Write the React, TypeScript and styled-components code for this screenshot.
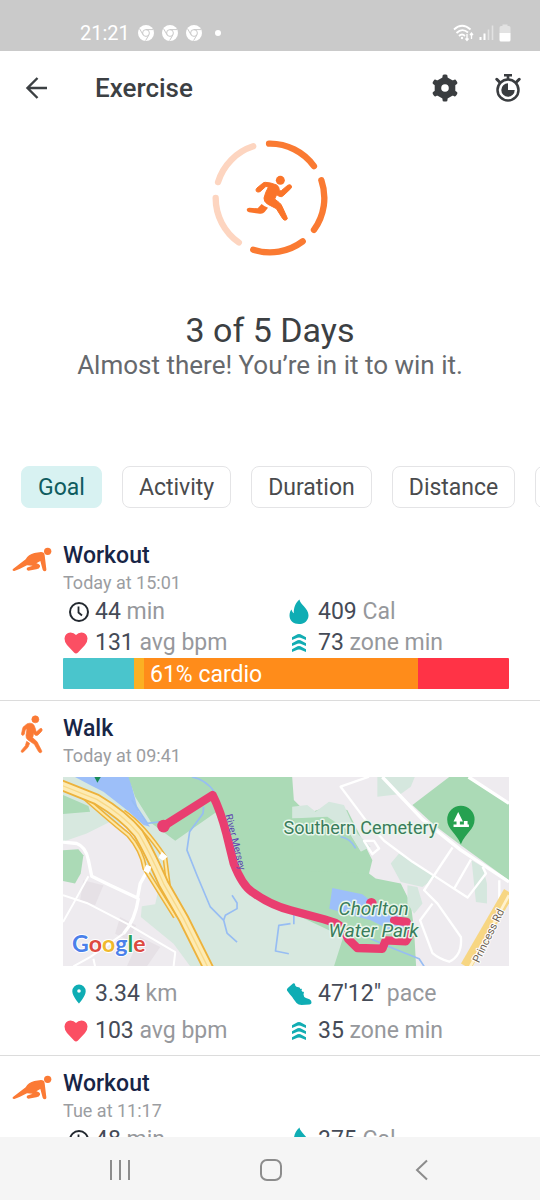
import React from "react";
import styled, { createGlobalStyle } from "styled-components";

const GlobalStyle = createGlobalStyle`
  * { box-sizing: border-box; }
  body { margin: 0; background: #fff; font-family: Roboto, "Liberation Sans", sans-serif; color: #3c4043; }
  button { font: inherit; color: inherit; border: 0; padding: 0; background: none; cursor: pointer; }
  svg { display: block; }
  h1, h2, h3, p, ul { margin: 0; padding: 0; }
`;

const Screen = styled.div`
  display: flex;
  flex-direction: column;
  height: 100vh;
  overflow: hidden;
`;

const StatusBar = styled.div`
  flex: none;
  display: flex;
  align-items: center;
  justify-content: space-between;
  height: 51px;
  padding: 15px 29px 0 80px;
  background: #cacaca;
  color: #fff;
  font-size: 20px;
`;

const StatusGroup = styled.div<{ $gap: number }>`
  display: flex;
  align-items: center;
  gap: ${(p) => p.$gap}px;
`;

const Dot = styled.span`
  width: 6px;
  height: 6px;
  margin-left: 5px;
  border-radius: 50%;
  background: #fff;
`;

const AppBar = styled.header`
  flex: none;
  display: flex;
  align-items: center;
  height: 74px;
  padding: 0 17px 0 24px;
`;

const ScreenTitle = styled.h1`
  flex: 1;
  margin-left: 45px;
  font-size: 26px;
  line-height: 32px;
  font-weight: 500;
`;

const Actions = styled.div`
  display: flex;
  align-items: center;
  gap: 34px;
`;

const Content = styled.main`
  flex: 1;
  min-height: 0;
  overflow-y: auto;
  scrollbar-width: none;
`;

const Hero = styled.section`
  display: flex;
  flex-direction: column;
  align-items: center;
  padding-top: 15px;
`;

const HeroTitle = styled.h2`
  margin-top: 54px;
  font-size: 34px;
  line-height: 40px;
  font-weight: 400;
`;

const HeroText = styled.p`
  font-size: 26px;
  line-height: 30px;
  color: #66696d;
`;

const Chips = styled.nav`
  display: flex;
  gap: 20px;
  margin: 86px 0 20px;
  padding-left: 21px;
  overflow: hidden;
`;

const Chip = styled.button<{ $active?: boolean }>`
  && {
    flex: none;
    height: 42px;
    padding: 0 16px;
    border: 1px solid ${(p) => (p.$active ? "#d8f2f2" : "#e4e4e6")};
    border-radius: 8px;
    background: ${(p) => (p.$active ? "#d8f2f2" : "#fff")};
    color: ${(p) => (p.$active ? "#0f5c5f" : "#4a4b4d")};
    font-size: 23px;
  }
`;

const List = styled.ul`
  list-style: none;
`;

const Entry = styled.li`
  display: flex;
  padding: 14px 31px 0 0;
  border-bottom: 1px solid #dcdcdc;
`;

const EntryIcon = styled.div<{ $top: number }>`
  flex: none;
  display: flex;
  justify-content: center;
  align-items: flex-start;
  width: 63px;
  padding-top: ${(p) => p.$top}px;
`;

const EntryBody = styled.div<{ $bottom: number }>`
  flex: 1;
  min-width: 0;
  padding-bottom: ${(p) => p.$bottom}px;
`;

const EntryTitle = styled.h3`
  font-size: 23px;
  line-height: 28px;
  font-weight: 500;
  color: #172546;
`;

const EntryTime = styled.p`
  font-size: 18px;
  line-height: 26px;
  color: #9b9da1;
`;

const Stats = styled.div<{ $row: number; $top?: number }>`
  display: grid;
  grid-template-columns: 1fr 1fr;
  grid-auto-rows: ${(p) => p.$row}px;
  align-items: center;
  margin-top: ${(p) => p.$top ?? 0}px;
`;

const StatBox = styled.div`
  display: flex;
  align-items: center;
  gap: 6px;
  font-size: 23px;
  line-height: 28px;
  color: #454b57;
  white-space: nowrap;
`;

const StatIcon = styled.span<{ $end?: boolean }>`
  display: flex;
  justify-content: ${(p) => (p.$end ? "flex-end" : "center")};
  width: 26px;
`;

const Unit = styled.span`
  color: #96989c;
`;

const ZoneBar = styled.div`
  display: flex;
  height: 31px;
  border-radius: 1px;
  overflow: hidden;
`;

const Zone = styled.div<{ $share: number; $color: string }>`
  flex: ${(p) => p.$share} 1 0;
  min-width: 0;
  background: ${(p) => p.$color};
  color: #fff;
  font-size: 23px;
  line-height: 34px;
  white-space: nowrap;
  text-indent: 6px;
`;

const MapFrame = styled.div`
  margin-top: 8px;

  svg {
    width: 100%;
    height: auto;
  }
`;

const NavBar = styled.nav`
  flex: none;
  display: flex;
  align-items: center;
  justify-content: space-between;
  height: 63px;
  padding: 2px 104px 0 106px;
  background: #f5f5f5;
`;

const NavButton = styled.button`
  display: flex;
  align-items: center;
  justify-content: center;
  width: 28px;
  height: 40px;
`;

const BrowserIcon = () => (
  <svg width="16" height="16" viewBox="0 0 16 16" aria-hidden="true">
    <circle cx="8" cy="8" r="8" fill="#fff" />
    <g fill="none" stroke="#cacaca" strokeWidth="1">
      <circle cx="8" cy="8" r="3.4" />
      <path d="M8 4.6H15M5 9.7L1.6 3.8M11 9.7L7.6 15.6" />
    </g>
  </svg>
);

const WifiIcon = () => (
  <svg width="21" height="18" viewBox="0 0 21 18" fill="none" stroke="#fff" aria-hidden="true">
    <path d="M1 5.5Q9 -2 17.500 5.500M3.500 9Q9 3.500 15 8.500M6 12Q9 9 12 12" strokeWidth="1.8" />
    <circle cx="9" cy="14" r="1.200" fill="#fff" stroke="none" />
    <path d="M14 10V16M12.500 14.500L14 16.500L15.500 14.500M18.500 15V9.500M17 11L18.500 9L20 11" strokeWidth="1.300" />
  </svg>
);

const SignalIcon = () => (
  <svg width="15" height="16" viewBox="0 0 15 16" aria-hidden="true">
    <path d="M1.500 12V15M5.500 8.500V15" stroke="#fff" strokeWidth="2" />
    <path d="M9.500 4.500V15M13.500 .500V15" stroke="#fff" strokeOpacity=".45" strokeWidth="1.600" />
  </svg>
);

const BatteryIcon = () => (
  <svg width="12" height="18" viewBox="0 0 12 18" aria-hidden="true">
    <path d="M.5 3.500Q.5 2 2 2H3.500V.500H8.500V2H10Q11.500 2 11.500 3.500V9H.5Z" fill="#fff" fillOpacity=".45" />
    <path d="M.5 9H11.500V16Q11.500 17.500 10 17.500H2Q.5 17.500 .5 16Z" fill="#fff" />
  </svg>
);

const BackArrow = () => (
  <svg width="26" height="26" viewBox="0 0 26 26" fill="none" stroke="#3c4043" strokeWidth="2.4" aria-hidden="true">
    <path d="M23 13H4M13.500 3L3.500 13L13.500 23" />
  </svg>
);

const GearIcon = () => (
  <svg width="28" height="28" viewBox="0 0 28 28" fill="#3a3d40" aria-hidden="true">
    <path d="M14 3.800L22.800 8.900V19.100L14 24.200L5.200 19.100V8.900Z" stroke="#3a3d40" strokeWidth="3" strokeLinejoin="round" />
    {[0, 60, 120, 180, 240, 300].map((a) => (
      <rect key={a} x="11.5" y="0.5" width="5" height="6" rx="1.5" transform={`rotate(${a} 14 14)`} />
    ))}
    <circle cx="14" cy="14" r="3.800" fill="#fff" />
  </svg>
);

const StopwatchIcon = () => (
  <svg width="30" height="30" viewBox="0 0 30 30" fill="none" stroke="#3a3d40" aria-hidden="true">
    <circle cx="15" cy="17" r="10.500" strokeWidth="2.500" />
    <path d="M11 2.200H19M15 2V6" strokeWidth="2.600" />
    <path d="M3.800 6.300L7 9.500M26.200 6.300L23 9.500" strokeWidth="3" strokeLinecap="round" />
    <path d="M15 10.300V17H21.700A6.700 6.700 0 1 1 15 10.300Z" fill="#3a3d40" stroke="none" />
  </svg>
);

const ringPoint = (deg: number) => {
  const a = (deg * Math.PI) / 180;
  return `${211 + 163 * Math.sin(a)} ${203 - 163 * Math.cos(a)}`;
};

const GoalRing = ({ done, total }: { done: number; total: number }) => (
  <svg width="116" height="116" viewBox="37 29 348 348" role="img" aria-label={`${done} of ${total}`}>
    <g fill="none" strokeWidth="19" strokeLinecap="round">
      {Array.from({ length: total }, (_, i) => (
        <path
          key={i}
          d={`M${ringPoint(i * 72 - 1)}A163 163 0 0 1 ${ringPoint(i * 72 + 54)}`}
          stroke={i < done ? "#fa7a32" : "#fdd5c0"}
        />
      ))}
    </g>
    <g fill="#fa7429">
      <circle cx="242" cy="150" r="13.500" />
      <path
        d="M197 156Q212 156 231 164Q238 168 239 178Q242 183 245 181L264 165Q270 161 274 165Q278 170 273 175L251 196Q245 202 237 197L231 193L225 206L239 217Q244 221 247 228L262 261Q265 267 259 269Q253 271 249 265L230 235L203 221Q192 213 193 203Q197 185 206 171L199 168L181 184Q174 187 170 183Q167 178 172 173L189 159Q192 156 197 156Z"
        stroke="#fa7429"
        strokeWidth="3"
      />
      <path d="M186 221Q194 229 205 232L195 245Q189 252 180 250L148 246Q141 243 141 238Q142 232 149 232L174 234Z" />
    </g>
  </svg>
);

const WorkoutIcon = () => (
  <svg width="40" height="25" viewBox="35 38 120 75" fill="#fb7a35" aria-hidden="true">
    <circle cx="142" cy="51" r="11" />
    <path d="M38 104L76 75Q84 60 102 56L122 53Q132 53 133 63L138 104Q139 110 134 111Q129 111 127 106L120 80L108 87Q121 91 119 97Q117 104 108 105L84 109Q78 108 79 103Q80 99 86 98L97 94L80 93Q60 104 42 110Q34 109 38 104Z" />
  </svg>
);

const WalkIcon = () => (
  <svg width="23" height="39" viewBox="60 38 69 117" fill="#fb7a35" stroke="#fb7a35" strokeWidth="2" strokeLinejoin="round" aria-hidden="true">
    <circle cx="106" cy="51" r="10.500" />
    <path d="M82 64Q90 61 97 64Q103 67 105 76L109 89L119 80Q124 76 126 80Q128 83 124 88L114 98Q107 102 103 96L101 93L98 106L110 117Q113 120 115 126L125 145Q127 150 122 151Q117 152 115 147L103 126L84 113Q77 108 78 99L81 79L76 82L73 95Q71 100 67 99Q63 97 65 92L68 78Q69 74 73 71Z" />
    <path d="M80 117L89 123L84 135L71 148Q66 152 64 149Q62 146 66 142L76 130Z" />
  </svg>
);

const ClockIcon = () => (
  <svg width="20" height="20" viewBox="0 0 20 20" fill="none" stroke="#22282f" strokeWidth="2" aria-hidden="true">
    <circle cx="10" cy="10" r="9" />
    <path d="M9.500 4.500V10.500L13 13.500" strokeWidth="1.800" />
  </svg>
);

const HeartIcon = () => (
  <svg width="26" height="24" viewBox="0 0 26 24" fill="#fb4f63" aria-hidden="true">
    <path d="M13 22.500Q12 22.500 11 21.500L4 14Q1.500 11 1.500 7.500Q2 2 7.500 1.500Q11 1.500 13 4Q15 1.500 18.500 1.500Q24 2 24.500 7.500Q24.500 11 22 14L15 21.500Q14 22.500 13 22.500Z" />
  </svg>
);

const FlameIcon = () => (
  <svg width="22" height="26" viewBox="0 0 22 26" fill="#0fadb4" aria-hidden="true">
    <path d="M11.500 .5C11.800 5 20.500 9.500 20.500 16.200C20.500 21.500 16.500 25 11 25C5.500 25 1.500 21.500 1.500 16.500C1.500 13.500 2.500 11.500 3.500 10.500C3.800 12 4.500 13.300 5.800 14.200C5.600 9 7.500 3.500 11.500 .5Z" />
  </svg>
);

const ZoneIcon = () => (
  <svg width="14" height="20" viewBox="0 0 14 20" fill="#12adb3" aria-hidden="true">
    {[0, 6, 12].map((y) => (
      <path key={y} d="M0 4.200L5.500 1.300Q7 .700 8.500 1.300L14 4.200V7L8.500 4.700Q7 4.200 5.500 4.700L0 7Z" transform={`translate(0 ${y})`} />
    ))}
  </svg>
);

const PinIcon = () => (
  <svg width="20" height="20" viewBox="-3 0 20 20" fill="#0fadb4" aria-hidden="true">
    <path fillRule="evenodd" d="M7 .5A6.700 6.700 0 0 0 .3 7.200C.3 12 7 19.500 7 19.500S13.700 12 13.700 7.200A6.700 6.700 0 0 0 7 .5ZM7 5.200A1.800 1.800 0 1 1 7 8.800A1.800 1.800 0 1 1 7 5.200Z" />
  </svg>
);

const ShoeIcon = () => (
  <svg width="26" height="24" viewBox="0 0 26 24" fill="#0fadb4" aria-hidden="true">
    <path d="M1 8.500Q.5 7 1.800 6L7 1.500Q8.500 .800 9 2.200Q9 4 10.500 4.700L13.500 5.500L14.500 7L16 6.800L15.500 8.500L16.800 10L18 9.800L17.500 12.500Q17.500 15 20 16L23.500 17.200Q25.800 18.500 25.500 21Q25 22.300 23.500 22.500L15.500 23Q12.500 23 10.500 21L7.500 17Q6 14.500 4 12.500Z" />
  </svg>
);

const RouteMap = () => (
  <svg viewBox="0 0 445 189" role="img" aria-label="Route map">
    <g transform="scale(.33333) translate(-9 -21)" fill="none" strokeLinejoin="round">
      <path d="M9 21H1344V588H9Z" fill="#d7e8df" />
      <path d="M45 21H208L235 125L270 170L250 165L200 120L130 65L90 45Z" fill="#9dbff9" />
      <path d="M103 21H122L112 38Z" fill="#188a57" />
      <path d="M205 21H1200V588H820L848 500L690 425L575 360L530 300L500 200L465 128L345 212L275 160L225 80Z" fill="#abdab6" />
      <path d="M9 75L85 108L90 125L9 132Z" fill="#abdab6" />
      <path d="M150 155L215 170L230 240L262 310L292 370L285 402L245 408L242 440L340 520L390 588H9V215L80 190Z" fill="#eeebef" />
      <path d="M9 240L55 237L70 255L62 310L45 340L9 332Z" fill="#abdab6" />
      <path d="M70 330L130 345L105 405L60 390ZM180 440L228 465L205 510L165 490ZM240 500L300 530L260 588H200Z" fill="#e6e1e6" />
      <path d="M695 21H1344V588H1066L1060 480L1050 400L1020 340L945 325L925 310L935 270L900 200L860 120L800 110L740 130L700 90Z" fill="#eeebef" />
      <path d="M695 110L740 105L765 125L805 95L850 105L870 150L890 190L930 230L900 245L860 180L800 140L695 145ZM950 21H1062L1050 50L1020 72L950 80ZM990 280L1015 250L1125 320L1085 350L1020 335ZM1232 270L1265 290L1278 340V400L1245 395ZM1040 345L1070 350L1085 400L1060 430L1040 400Z" fill="#d5e7de" />
      <path d="M695 145H800L860 180L900 245L930 275L922 310L695 300Z" fill="#abdab6" />
      <path d="M1055 105L1165 21H1225L1344 100V330L1200 225L1120 165Z" fill="#abdab6" />
      <path d="M815 353L905 372L940 400L1045 450L1050 475L1000 485L930 450L806 415Z" fill="#9dbff9" />
      <g stroke="#97bdf3" strokeWidth="5">
        <path d="M430 110L428 130L388 185L380 240L410 315L450 410L490 450L500 488L530 515M490 450L495 435L530 415L530 398L515 375M215 90L262 160L300 155" />
        <path d="M395 21Q435 28 462 65M840 200Q870 205 885 235M690 460L655 465L645 542L685 550M700 462V430M930 505L1000 535L1075 565L1090 588" />
      </g>
      <g stroke="#fff" strokeWidth="10">
        <path d="M9 216L50 220Q78 230 85 270L95 318L150 345L232 383L240 340L265 295M235 383Q225 450 190 490" />
        <path d="M9 375L80 398L200 460L345 545L340 588M85 318L40 400L9 455M190 490L90 560L40 588M100 565L105 588" strokeWidth="6" />
        <path d="M965 21L1085 148L1200 240L1344 335M1223 21L1344 100" strokeWidth="10" />
        <path d="M925 20L840 50L915 150L970 212L1055 275L1125 320L1220 382L1275 310L1265 290M1175 232L1090 360L1130 400L1200 500Q1205 555 1165 574Q1135 565 1115 548L1078 450L1115 400M1230 268L1180 355M1315 330V400M910 212L935 252L955 235L940 212Z" strokeWidth="7" />
      </g>
      <path d="M1344 365L1215 588" stroke="#f7d683" strokeWidth="34" />
      <path d="M1344 375L1228 588" stroke="#fff2cf" strokeWidth="8" />
      <g stroke="#edb23b" strokeWidth="15">
        <path d="M70 80Q155 155 205 195Q245 240 254 295L345 440M190 125Q250 165 314 262L325 350L360 430" />
      </g>
      <g stroke="#fde7a5" strokeWidth="6">
        <path d="M70 80Q155 155 205 195Q245 240 254 295L345 440M190 125Q250 165 314 262L325 350L360 430" />
      </g>
      <path d="M-5 42L110 88Q190 135 235 190Q265 240 310 340L370 445L450 605" stroke="#edb23b" strokeWidth="34" />
      <path d="M-5 42L110 88Q190 135 235 190Q265 240 310 340L370 445L450 605" stroke="#fdebb4" strokeWidth="23" />
      <path d="M-5 42L110 88Q190 135 235 190Q265 240 310 340L370 445L450 605" stroke="#f9d988" strokeWidth="4" />
      <path d="M305 245L322 260L308 272L295 262ZM258 284L274 290L266 310L250 302Z" fill="#fff" />
      <path d="M310 168L457 75Q480 120 498 190L520 280Q545 345 575 365Q630 405 690 420L790 447L825 458Q850 470 862 505L890 533L965 535L975 510L1035 513L1048 492L1038 455L1000 450" stroke="#e93e70" strokeWidth="25" strokeLinecap="round" />
      <circle cx="310" cy="168" r="19" fill="#e93e70" />
      <circle cx="932" cy="399" r="16" fill="#e93e70" />
      <path d="M1200 107A41 41 0 0 0 1159 148C1159 178 1186 188 1200 222C1214 188 1241 178 1241 148A41 41 0 0 0 1200 107Z" fill="#26a150" />
      <path d="M1192 126L1178 154H1187V163H1178V171H1224V163H1220V153H1209V163H1197V154H1206Z" fill="#fff" />
    </g>
    <g stroke="#e9f6ec" strokeWidth="3" strokeLinejoin="round" paintOrder="stroke" fontFamily="Roboto, sans-serif">
      <text x="220" y="57" fontSize="18" fill="#3a7d5b">Southern Cemetery</text>
      <text x="275" y="138" fontSize="19" fontStyle="italic" fill="#3a7d5b">Chorlton</text>
      <text x="265" y="160" fontSize="19" fontStyle="italic" fill="#3a7d5b">Water Park</text>
      <text transform="translate(415 186) rotate(-64)" fontSize="11" stroke="#fff" strokeWidth="2" fill="#6e5f50">Princess Rd</text>
      <text transform="translate(162 38) rotate(76)" fontSize="10" stroke="none" fill="#5b45b0">River Mersey</text>
      <text x="9" y="175" fontFamily="Lato, sans-serif" fontSize="23" fontWeight="700" stroke="#fff" strokeWidth="2">
        <tspan fill="#4a80ea">G</tspan>
        <tspan fill="#dd4a40">o</tspan>
        <tspan fill="#f0b92d">o</tspan>
        <tspan fill="#4a80ea">g</tspan>
        <tspan fill="#2f9f57">l</tspan>
        <tspan fill="#dd4a40">e</tspan>
      </text>
    </g>
  </svg>
);

type StatProps = { icon: React.ReactNode; value: string; unit: string; end?: boolean };

const Stat = ({ icon, value, unit, end }: StatProps) => (
  <StatBox>
    <StatIcon $end={end}>{icon}</StatIcon>
    <span>
      {value} <Unit>{unit}</Unit>
    </span>
  </StatBox>
);

export default function App() {
  return (
    <>
      <GlobalStyle />
      <Screen>
        <StatusBar>
          <StatusGroup $gap={8}>
            <span>21:21</span>
            <BrowserIcon />
            <BrowserIcon />
            <BrowserIcon />
            <Dot />
          </StatusGroup>
          <StatusGroup $gap={5}>
            <WifiIcon />
            <SignalIcon />
            <BatteryIcon />
          </StatusGroup>
        </StatusBar>
        <AppBar>
          <button aria-label="Back"><BackArrow /></button>
          <ScreenTitle>Exercise</ScreenTitle>
          <Actions>
            <button aria-label="Settings"><GearIcon /></button>
            <button aria-label="Start timer"><StopwatchIcon /></button>
          </Actions>
        </AppBar>
        <Content>
          <Hero>
            <GoalRing done={3} total={5} />
            <HeroTitle>3 of 5 Days</HeroTitle>
            <HeroText>Almost there! You’re in it to win it.</HeroText>
          </Hero>
          <Chips>
            <Chip $active>Goal</Chip>
            <Chip>Activity</Chip>
            <Chip>Duration</Chip>
            <Chip>Distance</Chip>
            <Chip aria-label="More" />
          </Chips>
          <List>
            <Entry>
              <EntryIcon $top={5}><WorkoutIcon /></EntryIcon>
              <EntryBody $bottom={11}>
                <EntryTitle>Workout</EntryTitle>
                <EntryTime>Today at 15:01</EntryTime>
                <Stats $row={31}>
                  <Stat icon={<ClockIcon />} value="44" unit="min" end />
                  <Stat icon={<FlameIcon />} value="409" unit="Cal" />
                  <Stat icon={<HeartIcon />} value="131" unit="avg bpm" />
                  <Stat icon={<ZoneIcon />} value="73" unit="zone min" />
                </Stats>
                <ZoneBar>
                  <Zone $share={71} $color="#4ac5cc" />
                  <Zone $share={10} $color="#fbb023" />
                  <Zone $share={274} $color="#ff8c1a">61% cardio</Zone>
                  <Zone $share={91} $color="#ff3346" />
                </ZoneBar>
              </EntryBody>
            </Entry>
            <Entry>
              <EntryIcon $top={0}><WalkIcon /></EntryIcon>
              <EntryBody $bottom={6}>
                <EntryTitle>Walk</EntryTitle>
                <EntryTime>Today at 09:41</EntryTime>
                <MapFrame><RouteMap /></MapFrame>
                <Stats $row={37} $top={9}>
                  <Stat icon={<PinIcon />} value="3.34" unit="km" end />
                  <Stat icon={<ShoeIcon />} value={"47'12\""} unit="pace" />
                  <Stat icon={<HeartIcon />} value="103" unit="avg bpm" />
                  <Stat icon={<ZoneIcon />} value="35" unit="zone min" />
                </Stats>
              </EntryBody>
            </Entry>
            <Entry>
              <EntryIcon $top={5}><WorkoutIcon /></EntryIcon>
              <EntryBody $bottom={11}>
                <EntryTitle>Workout</EntryTitle>
                <EntryTime>Tue at 11:17</EntryTime>
                <Stats $row={31}>
                  <Stat icon={<ClockIcon />} value="48" unit="min" end />
                  <Stat icon={<FlameIcon />} value="375" unit="Cal" />
                </Stats>
              </EntryBody>
            </Entry>
          </List>
        </Content>
        <NavBar>
          <NavButton aria-label="Recent apps">
            <svg width="22" height="22" viewBox="0 0 22 22" stroke="#8c8c8c" strokeWidth="2">
              <path d="M2 1V21M11 1V21M20 1V21" />
            </svg>
          </NavButton>
          <NavButton aria-label="Home">
            <svg width="24" height="24" viewBox="0 0 24 24" fill="none" stroke="#8c8c8c" strokeWidth="2">
              <rect x="2" y="2" width="20" height="20" rx="6" />
            </svg>
          </NavButton>
          <NavButton aria-label="Back">
            <svg width="14" height="22" viewBox="0 0 14 22" fill="none" stroke="#8c8c8c" strokeWidth="2">
              <path d="M12 1.500L2 11L12 20.500" />
            </svg>
          </NavButton>
        </NavBar>
      </Screen>
    </>
  );
}
